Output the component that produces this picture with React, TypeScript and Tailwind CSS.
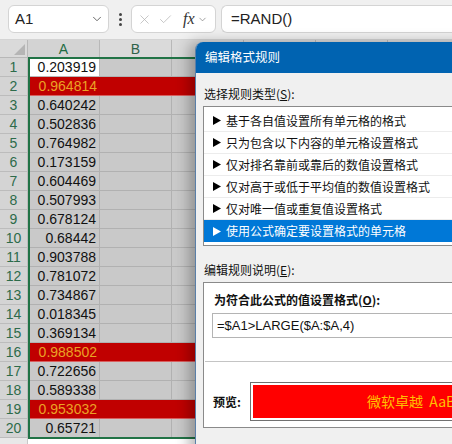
import { ChevronDown, X, Check } from "lucide-react";

const ROWS: { v: string; hot?: boolean }[] = [
  { v: "0.203919" },
  { v: "0.964814", hot: true },
  { v: "0.640242" },
  { v: "0.502836" },
  { v: "0.764982" },
  { v: "0.173159" },
  { v: "0.604469" },
  { v: "0.507993" },
  { v: "0.678124" },
  { v: "0.68442" },
  { v: "0.903788" },
  { v: "0.781072" },
  { v: "0.734867" },
  { v: "0.018345" },
  { v: "0.369134" },
  { v: "0.988502", hot: true },
  { v: "0.722656" },
  { v: "0.589338" },
  { v: "0.953032", hot: true },
  { v: "0.65721" },
];

const RULES = [
  "基于各自值设置所有单元格的格式",
  "只为包含以下内容的单元格设置格式",
  "仅对排名靠前或靠后的数值设置格式",
  "仅对高于或低于平均值的数值设置格式",
  "仅对唯一值或重复值设置格式",
  "使用公式确定要设置格式的单元格",
];

const CJK = "font-['Noto_Sans_CJK_SC',sans-serif]";

function Arrow({ white }: { white?: boolean }) {
  return (
    <svg width="8" height="9" viewBox="0 0 8 9" className="shrink-0">
      <path d="M0 0 L8 4.5 L0 9 Z" fill={white ? "#ffffff" : "#000000"} />
    </svg>
  );
}

function Toolbar() {
  return (
    <div className="h-10 flex items-start pt-[5px] bg-[#f0f0f0] border-b border-[#d4d4d4] font-['Liberation_Sans',sans-serif]">
      <div className="ml-2 w-[101px] h-[28px] bg-white border border-[#d4d4d4] rounded-md flex items-center pl-[6px] pr-[4px]">
        <span className="text-[15px] text-[#222] flex-1">A1</span>
        <ChevronDown size={14} strokeWidth={1.5} className="text-[#555]" />
      </div>
      <div className="w-[22px] h-[28px] flex flex-col items-center justify-center gap-[2px]">
        <span className="w-[3px] h-[3px] rounded-full bg-[#444]" />
        <span className="w-[3px] h-[3px] rounded-full bg-[#444]" />
        <span className="w-[3px] h-[3px] rounded-full bg-[#444]" />
      </div>
      <div className="w-[85px] h-[28px] bg-white border border-[#d4d4d4] rounded-md flex items-center pl-[5px] gap-[6px]">
        <X size={15} strokeWidth={1.2} className="text-[#b4b4b4]" />
        <Check size={15} strokeWidth={1.2} className="text-[#b4b4b4]" />
        <span className="ml-[4px] text-[16px] italic font-['Liberation_Serif',serif] text-[#333]">fx</span>
        <ChevronDown size={11} strokeWidth={1.5} className="text-[#777] -ml-[4px]" />
      </div>
      <div className="ml-[5px] flex-1 h-[28px] bg-white border-t border-b border-l border-[#d4d4d4] rounded-l-md flex items-center pl-[9px]">
        <span className="text-[15px] text-[#222]">=RAND()</span>
      </div>
    </div>
  );
}

function Grid() {
  const extra = [0, 1, 2, 3, 4];
  return (
    <div className="relative font-['Liberation_Sans',sans-serif]">
      <div className="flex h-[18px] bg-[#dadada] border-b border-[#b8b8b8]">
        <div className="w-[28px] shrink-0 relative border-r border-[#b8b8b8]">
          <div className="absolute right-[2px] bottom-[2px] w-0 h-0 border-l-[11px] border-l-transparent border-b-[11px] border-b-[#b5b5b5]" />
        </div>
        <div className="w-[72px] shrink-0 border-r border-[#b8b8b8] bg-[#d3d3d3] text-center text-[14px] leading-[18px] text-[#1f6b43]">A</div>
        <div className="w-[72px] shrink-0 border-r border-[#b8b8b8] text-center text-[14px] leading-[18px] text-[#2f6249]">B</div>
        {extra.map((i) => (
          <div key={i} className="w-[72px] shrink-0 border-r border-[#b8b8b8]" />
        ))}
      </div>
      {ROWS.map((r, i) => (
        <div key={i} className="flex h-[19px]">
          <div className="w-[28px] shrink-0 bg-[#d4d4d4] border-r border-b border-[#bcbcbc] text-center text-[14px] leading-[18px] text-[#2d6b4a]">
            {i + 1}
          </div>
          {r.hot ? (
            <div className="flex-1 bg-[#c00000] border-b border-[#d86060] flex">
              <div className="w-[72px] shrink-0 text-right pr-[3px] text-[14px] leading-[18px] text-[#eba225]">{r.v}</div>
            </div>
          ) : (
            <div className="flex-1 flex">
              <div
                className={
                  i === 0
                    ? "w-[72px] shrink-0 bg-white border-r border-b border-[#b8b8b8] text-right pr-[3px] text-[14px] leading-[18px] text-[#111]"
                    : "w-[72px] shrink-0 bg-[#c9c9c9] border-r border-b border-[#b1b1b1] text-right pr-[3px] text-[14px] leading-[18px] text-[#111]"
                }
              >
                {r.v}
              </div>
              <div className="w-[72px] shrink-0 bg-[#c9c9c9] border-r border-b border-[#b1b1b1]" />
              {extra.map((k) => (
                <div key={k} className="w-[72px] shrink-0 bg-[#c9c9c9] border-r border-b border-[#b1b1b1]" />
              ))}
            </div>
          )}
        </div>
      ))}
      <div className="flex h-[19px]">
        <div className="w-[28px] shrink-0 bg-[#e8e8e8] border-r border-[#c8c8c8]" />
        <div className="flex-1 bg-white" />
      </div>
      {/* selection outline */}
      <div className="absolute left-[28px] top-[17px] w-[500px] h-[382px] border-2 border-[#217346] pointer-events-none" />
    </div>
  );
}

function Dialog() {
  return (
    <div className={`absolute left-[195px] top-[42px] w-[320px] h-[420px] bg-[#f0f0f0] rounded-tl-lg overflow-hidden shadow-[-6px_0_14px_rgba(0,0,0,0.28)] border-l border-[#5a7fa8] ${CJK}`}>
      <div className="h-[31px] bg-[#0063b1] flex items-center pl-[9px] text-white text-[12.5px]">编辑格式规则</div>
      <div className="pl-[7px]">
        <div className="mt-[13px] pl-[1px] text-[12px] leading-4 text-[#111]">
          选择规则类型(<span className="underline">S</span>):
        </div>
        <div className="mt-[4px] h-[140px] bg-white border border-[#8a8a8a] border-r-0 pt-[3px]">
          {RULES.map((t, i) => {
            const sel = i === RULES.length - 1;
            return (
              <div
                key={t}
                className={
                  sel
                    ? "h-[22px] flex items-center gap-[5px] pl-[9px] bg-[#0078d7] text-white text-[12px]"
                    : "h-[22px] flex items-center gap-[5px] pl-[9px] border-b border-[#ececec] text-[#111] text-[12px]"
                }
              >
                <Arrow white={sel} />
                <span>{t}</span>
              </div>
            );
          })}
        </div>
        <div className="mt-[16px] pl-[1px] text-[12px] leading-4 text-[#111]">
          编辑规则说明(<span className="underline">E</span>):
        </div>
        <div className="mt-[4px] h-[146px] bg-white border border-[#8a8a8a] border-r-0 pt-[9px]">
          <div className="pl-[10px] text-[12px] leading-4 font-bold text-[#111]">
            为符合此公式的值设置格式(<span className="underline">O</span>):
          </div>
          <div className="mt-[5px] ml-[8px] h-[25px] border border-[#b4b4b4] border-r-0 bg-white flex items-center pl-[4px] font-['Liberation_Sans',sans-serif] text-[13px] text-[#111]">
            =$A1&gt;LARGE($A:$A,4)
          </div>
          <div className="mt-[23px] ml-[1px] h-px bg-[#c4c4c4]" />
          <div className="mt-[20px] flex items-center">
            <div className="w-[46px] pl-[9px] text-[12px] font-bold text-[#111]">预览:</div>
            <div className="flex-1 h-[39px] border border-[#707070] border-r-0 p-[2px] bg-white">
              <div className="h-full bg-[#ff0000] flex items-center pl-[114px] text-[14px] text-[#ffc000] whitespace-nowrap">
                微软卓越&nbsp; AaBbCc
              </div>
            </div>
          </div>
        </div>
      </div>
    </div>
  );
}

export default function App() {
  return (
    <div className="relative w-[452px] h-[444px] overflow-hidden bg-white">
      <Toolbar />
      <Grid />
      <Dialog />
    </div>
  );
}
